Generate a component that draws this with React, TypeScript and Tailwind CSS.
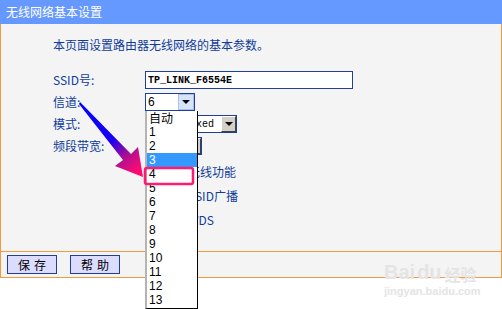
import React from 'react';

const cjk = { fontFamily: '"SimSun", "Noto Sans CJK SC", "Liberation Sans", sans-serif' };
const mono = { fontFamily: '"Liberation Mono", "DejaVu Sans Mono", monospace' };

const channels = ['自动', '1', '2', '3', '4', '5', '6', '7', '8', '9', '10', '11', '12', '13'];

const Arrow = () => (
  <svg width="8" height="5" viewBox="0 0 8 5">
    <polygon points="0,0 8,0 4,4" fill="#000" />
  </svg>
);

const Row = ({ label, h, children }: { label: string; h: string; children?: React.ReactNode }) => (
  <div className={`flex items-center ${h}`}>
    <div className="w-[92px] text-[12px] leading-[14px] text-[#0f3c9e]">{label}</div>
    {children}
  </div>
);

const CheckRow = ({ text }: { text: string }) => (
  <div className="flex items-center h-[24px] pl-[92px]">
    <div className="ml-[2px] w-[13px] h-[13px] border border-[#1c3fa0] bg-white" />
    <span className="ml-[4px] text-[12px] leading-[14px] text-[#0f3c9e]">{text}</span>
  </div>
);

export default function App() {
  return (
    <div className="relative w-[502px] h-[309px] bg-white overflow-hidden" style={cjk}>
      {/* title bar */}
      <div className="h-[24px] bg-[#6699ff] flex items-center pl-[6px]">
        <span className="text-white text-[12px] leading-[14px]">无线网络基本设置</span>
      </div>

      {/* main panel */}
      <div className="h-[227px] bg-[#f4f4f4] border-l border-r border-[#f39a3f] pl-[52px] pt-[14px]">
        <div className="text-[12px] leading-[14px] text-[#0f3c9e]">本页面设置路由器无线网络的基本参数。</div>
        <div className="mt-[17px]">
          <Row label="SSID号:" h="h-[22px]">
            <div className="w-[208px] h-[18px] border border-[#1c3fa0] bg-white flex items-center pl-[2px]">
              <span className="text-[10px] font-bold text-black" style={mono}>TP_LINK_F6554E</span>
            </div>
          </Row>
          <Row label="信道:" h="h-[22px]">
            <div className="w-[50px] h-[18px] border border-[#1c3fa0] bg-white flex items-center">
              <span className="flex-1 pl-[2px] text-[12px] leading-[14px] text-black" style={{ fontFamily: '"Liberation Sans", sans-serif' }}>6</span>
              <div className="w-[16px] h-[16px] bg-[#d6e4f8] border border-[#a9bfe3] flex items-center justify-center">
                <Arrow />
              </div>
            </div>
          </Row>
          <Row label="模式:" h="h-[22px]">
            <div className="w-[92px] h-[18px] border border-[#1c3fa0] bg-white flex items-center">
              <span className="flex-1 pl-[2px] text-[10px] text-black" style={mono}>11bgn mixed</span>
              <div className="w-[15px] h-[16px] bg-[#d4d0c8] border border-t-white border-l-white border-r-[#404040] border-b-[#404040] flex items-center justify-center">
                <Arrow />
              </div>
            </div>
          </Row>
          <Row label="频段带宽:" h="h-[22px]">
            <div className="w-[57px] h-[18px] border border-[#1c3fa0] bg-white flex items-center">
              <span className="flex-1 pl-[2px] text-[12px] leading-[14px] text-black">自动</span>
              <div className="w-[15px] h-[16px] bg-[#d4d0c8] border border-t-white border-l-white border-r-[#404040] border-b-[#404040] flex items-center justify-center">
                <Arrow />
              </div>
            </div>
          </Row>
          <div className="h-[3px]" />
          <CheckRow text="开启无线功能" />
          <CheckRow text="开启SSID广播" />
          <CheckRow text="开启WDS" />
        </div>
      </div>

      {/* button bar */}
      <div className="h-[27px] bg-[#f4f4f4] border border-[#f39a3f] flex items-center pl-[6px] gap-[13px]">
        <button className="w-[50px] h-[19px] bg-[#dcdcff] border border-[#1c3fa0] text-[12px] leading-[14px] text-black tracking-[4px] pl-[4px]">保存</button>
        <button className="w-[50px] h-[19px] bg-[#dcdcff] border border-[#1c3fa0] text-[12px] leading-[14px] text-black tracking-[4px] pl-[4px]">帮助</button>
      </div>

      {/* open channel list */}
      <div className="absolute left-[145px] top-[111px] w-[53px] h-[198px] bg-white border-l-2 border-l-[#b4b4b4] border-r border-r-black border-b border-b-black">
        {channels.map((c) => (
          <div
            key={c}
            className={`h-[14px] pl-[2px] flex items-center text-[12px] leading-[14px] ${c === '3' ? 'bg-[#3399ff] text-white' : 'text-black'}`}
            style={c === '自动' ? cjk : { fontFamily: '"Liberation Sans", sans-serif' }}
          >
            {c}
          </div>
        ))}
      </div>

      {/* annotation arrow */}
      <svg className="absolute left-0 top-0 pointer-events-none" width="502" height="309" viewBox="0 0 502 309">
        <defs>
          <linearGradient id="ag" gradientUnits="userSpaceOnUse" x1="80" y1="103" x2="138" y2="170">
            <stop offset="0" stopColor="#0000ff" />
            <stop offset="0.55" stopColor="#1a00f5" />
            <stop offset="0.8" stopColor="#b0108f" />
            <stop offset="1" stopColor="#ff0a72" />
          </linearGradient>
        </defs>
        <polygon points="80,102 131,154 138,147 143,177 115,166 123,160 79,104" fill="url(#ag)" />
        <rect x="145" y="168" width="48" height="16" rx="2" fill="none" stroke="#ff1a72" strokeWidth="2.5" />
      </svg>

      {/* watermark */}
      <div className="absolute left-[384px] top-[262px] pointer-events-none text-[#e4e4e4]" style={{ fontFamily: '"Liberation Sans", sans-serif' }}>
        <div className="flex items-end leading-none">
          <span className="text-[20px] font-bold">Bai</span>
          <span className="text-[20px] font-bold ml-[2px]">du</span>
          <span className="text-[16px] font-bold ml-[3px]" style={cjk}>经验</span>
        </div>
        <div className="text-[11px] font-bold mt-[4px] leading-none">jingyan.baidu.com</div>
      </div>
    </div>
  );
}
